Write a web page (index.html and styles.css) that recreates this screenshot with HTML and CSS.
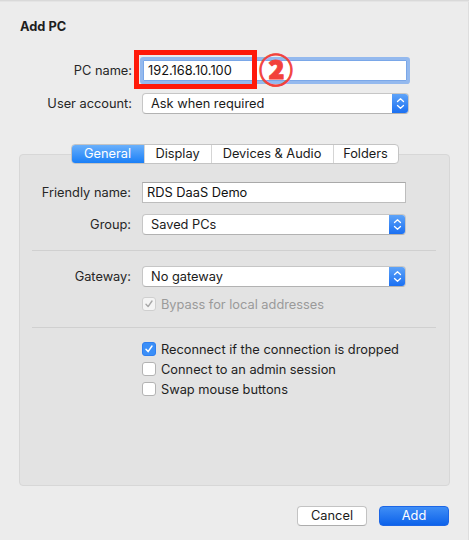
FILE: index.html
```html
<!DOCTYPE html>
<html>
<head>
<meta charset="utf-8">
<link rel="stylesheet" href="styles.css">
</head>
<body>
<div class="dialog">
  <h1 class="title">Add PC</h1>

  <div class="form top-form">
    <label class="lbl">PC name:</label>
    <div class="ctl">
      <div class="field focused">192.168.10.100</div>
    </div>
    <label class="lbl">User account:</label>
    <div class="ctl">
      <div class="popup"><span class="popup-text">Ask when required</span><span class="stepper"><svg width="9" height="13" viewBox="0 0 9 13"><path d="M1.5 4.5 L4.5 1.8 L7.5 4.5 M1.5 8.5 L4.5 11.2 L7.5 8.5" fill="none" stroke="#fff" stroke-width="1.3" stroke-linecap="round" stroke-linejoin="round"/></svg></span></div>
    </div>
  </div>

  <div class="annot-box"></div>
  <div class="annot-num">②</div>

  <div class="panel">
    <div class="tabs">
      <span class="tab active">General</span>
      <span class="tab">Display</span>
      <span class="tab">Devices &amp; Audio</span>
      <span class="tab">Folders</span>
    </div>

    <div class="form panel-form first">
      <label class="lbl">Friendly name:</label>
      <div class="ctl"><div class="field">RDS DaaS Demo</div></div>
      <label class="lbl">Group:</label>
      <div class="ctl">
        <div class="popup"><span class="popup-text">Saved PCs</span><span class="stepper"><svg width="9" height="13" viewBox="0 0 9 13"><path d="M1.5 4.5 L4.5 1.8 L7.5 4.5 M1.5 8.5 L4.5 11.2 L7.5 8.5" fill="none" stroke="#fff" stroke-width="1.3" stroke-linecap="round" stroke-linejoin="round"/></svg></span></div>
      </div>
    </div>

    <div class="sep"></div>

    <div class="form panel-form gw">
      <label class="lbl">Gateway:</label>
      <div class="ctl">
        <div class="popup"><span class="popup-text">No gateway</span><span class="stepper"><svg width="9" height="13" viewBox="0 0 9 13"><path d="M1.5 4.5 L4.5 1.8 L7.5 4.5 M1.5 8.5 L4.5 11.2 L7.5 8.5" fill="none" stroke="#fff" stroke-width="1.3" stroke-linecap="round" stroke-linejoin="round"/></svg></span></div>
      </div>
      <span></span>
      <div class="ctl check-row disabled">
        <span class="cb cb-disabled"><svg width="10" height="10" viewBox="0 0 10 10"><path d="M2 5.3 L4.1 7.6 L8 2" fill="none" stroke="#a8a8a8" stroke-width="1.4" stroke-linecap="round" stroke-linejoin="round"/></svg></span>
        <span>Bypass for local addresses</span>
      </div>
    </div>

    <div class="sep sep2"></div>

    <div class="checks">
      <div class="check-row">
        <span class="cb cb-on"><svg width="10" height="10" viewBox="0 0 10 10"><path d="M2 5.3 L4.1 7.6 L8 2" fill="none" stroke="#fff" stroke-width="1.5" stroke-linecap="round" stroke-linejoin="round"/></svg></span>
        <span>Reconnect if the connection is dropped</span>
      </div>
      <div class="check-row">
        <span class="cb"></span>
        <span>Connect to an admin session</span>
      </div>
      <div class="check-row">
        <span class="cb"></span>
        <span>Swap mouse buttons</span>
      </div>
    </div>
  </div>

  <div class="buttons">
    <button class="btn">Cancel</button>
    <button class="btn primary">Add</button>
  </div>
</div>
</body>
</html>
```

FILE: styles.css
```css
html, body {
  margin: 0;
  padding: 0;
}
body {
  width: 469px;
  height: 540px;
  background: #ececec;
  font-family: "Inter", "Liberation Sans", Arial, sans-serif;
  font-size: 12.8px;
  color: #262626;
  overflow: hidden;
  box-shadow: inset 0 1px 0 #d9d9d9, inset 0 2px 0 #e4e4e4, inset -1px 0 0 #dedede;
}
.dialog {
  position: relative;
  height: 540px;
  box-sizing: border-box;
  padding-top: 19px;
}
.title {
  margin: 0 0 0 20px;
  font-size: 12.8px;
  line-height: 16px;
  font-weight: 700;
  color: #1e1e1e;
}
.form {
  display: grid;
  align-items: center;
}
.top-form {
  margin: 25px 0 0 20px;
  grid-template-columns: 112px 267px;
  column-gap: 10px;
  row-gap: 12px;
}
.lbl {
  text-align: right;
  white-space: nowrap;
}
.field {
  height: 21px;
  box-sizing: border-box;
  background: #fff;
  border: 1px solid #bdbdbd;
  border-top-color: #a9a9a9;
  padding: 0 0 0 4px;
  line-height: 19px;
  color: #111;
}
.top-form .field {
  margin: 0 2px 0 1px;
}
.field.focused {
  border-color: #7aa7e8;
  box-shadow: 0 0 0 3px #94b9ee;
  border-radius: 1px;
}
.popup {
  height: 21px;
  box-sizing: border-box;
  display: flex;
  align-items: stretch;
  background: #fff;
  border: 1px solid #c6c6c6;
  border-bottom-color: #b2b2b2;
  border-radius: 4px;
  overflow: hidden;
}
.popup-text {
  flex: 1;
  padding-left: 8px;
  line-height: 19px;
  color: #1a1a1a;
}
.stepper {
  width: 16px;
  display: flex;
  align-items: center;
  justify-content: center;
  background: linear-gradient(#5ea3f8, #1b70f2);
}
.annot-box {
  position: absolute;
  left: 134px;
  top: 50px;
  width: 123px;
  height: 39px;
  box-sizing: border-box;
  border: 5px solid #ff1a0a;
}
.annot-num {
  position: absolute;
  left: 259px;
  top: 49px;
  font-family: "Noto Sans CJK JP", sans-serif;
  font-size: 34px;
  line-height: 40px;
  font-weight: 900;
  color: #f2423a;
  -webkit-text-stroke: 0.9px #f2423a;
}
.panel {
  margin: 40px 0 0 19px;
  width: 431px;
  height: 332px;
  box-sizing: border-box;
  background: #e3e3e3;
  border: 1px solid #d7d7d7;
  border-radius: 4px;
}
.tabs {
  display: flex;
  width: 328px;
  height: 20px;
  box-sizing: border-box;
  margin: -11px auto 0;
  background: #fff;
  border: 1px solid #c4c4c4;
  border-radius: 4px;
  overflow: hidden;
}
.tab {
  display: flex;
  align-items: center;
  justify-content: center;
  line-height: 17px;
  padding-bottom: 1px;
  border-left: 1px solid #d5d5d5;
  color: #1a1a1a;
}
.tab:nth-child(1) { width: 72px; border-left: none; }
.tab:nth-child(2) { width: 66px; }
.tab:nth-child(3) { width: 121px; }
.tab:nth-child(4) { flex: 1; }
.tab.active {
  background: linear-gradient(#6ab0fb, #1a7ff7);
  color: #fff;
}
.panel-form {
  grid-template-columns: 111px 264px;
  column-gap: 11px;
  padding-left: 0;
}
.panel-form.first {
  margin-top: 18px;
  row-gap: 11px;
}
.sep {
  height: 1px;
  background: #d0d0d0;
  margin: 15px 13px 0 12px;
}
.panel-form.gw {
  margin-top: 15px;
  row-gap: 10px;
}
.check-row {
  display: flex;
  align-items: center;
  gap: 5px;
  height: 14px;
  white-space: nowrap;
  color: #1e1e1e;
}
.check-row.disabled {
  color: #9a9a9a;
}
.sep2 {
  margin-top: 16px;
}
.checks {
  margin: 14px 0 0 122px;
  display: flex;
  flex-direction: column;
  gap: 6px;
}
.cb {
  width: 14px;
  height: 14px;
  box-sizing: border-box;
  flex: none;
  background: #fff;
  border: 1px solid #b3b3b3;
  border-radius: 3px;
  display: flex;
  align-items: center;
  justify-content: center;
}
.cb-on {
  background: #3b8ff8;
  border-color: #2f7ff0;
}
.cb-disabled {
  background: #f4f4f4;
  border-color: #cfcfcf;
}
.buttons {
  display: flex;
  justify-content: flex-end;
  gap: 12px;
  margin: 20px 20px 0 0;
}
.btn {
  width: 70px;
  height: 20px;
  box-sizing: border-box;
  font-family: "Inter", "Liberation Sans", Arial, sans-serif;
  font-size: 12.8px;
  line-height: 17px;
  padding: 0 0 1px;
  border-radius: 4px;
  background: #fff;
  border: 1px solid #c3c3c3;
  border-bottom-color: #adadad;
  color: #1a1a1a;
}
.btn.primary {
  background: linear-gradient(#3f8ef6, #0d62ea);
  border-color: #1c66e6;
  color: #fff;
}
```
